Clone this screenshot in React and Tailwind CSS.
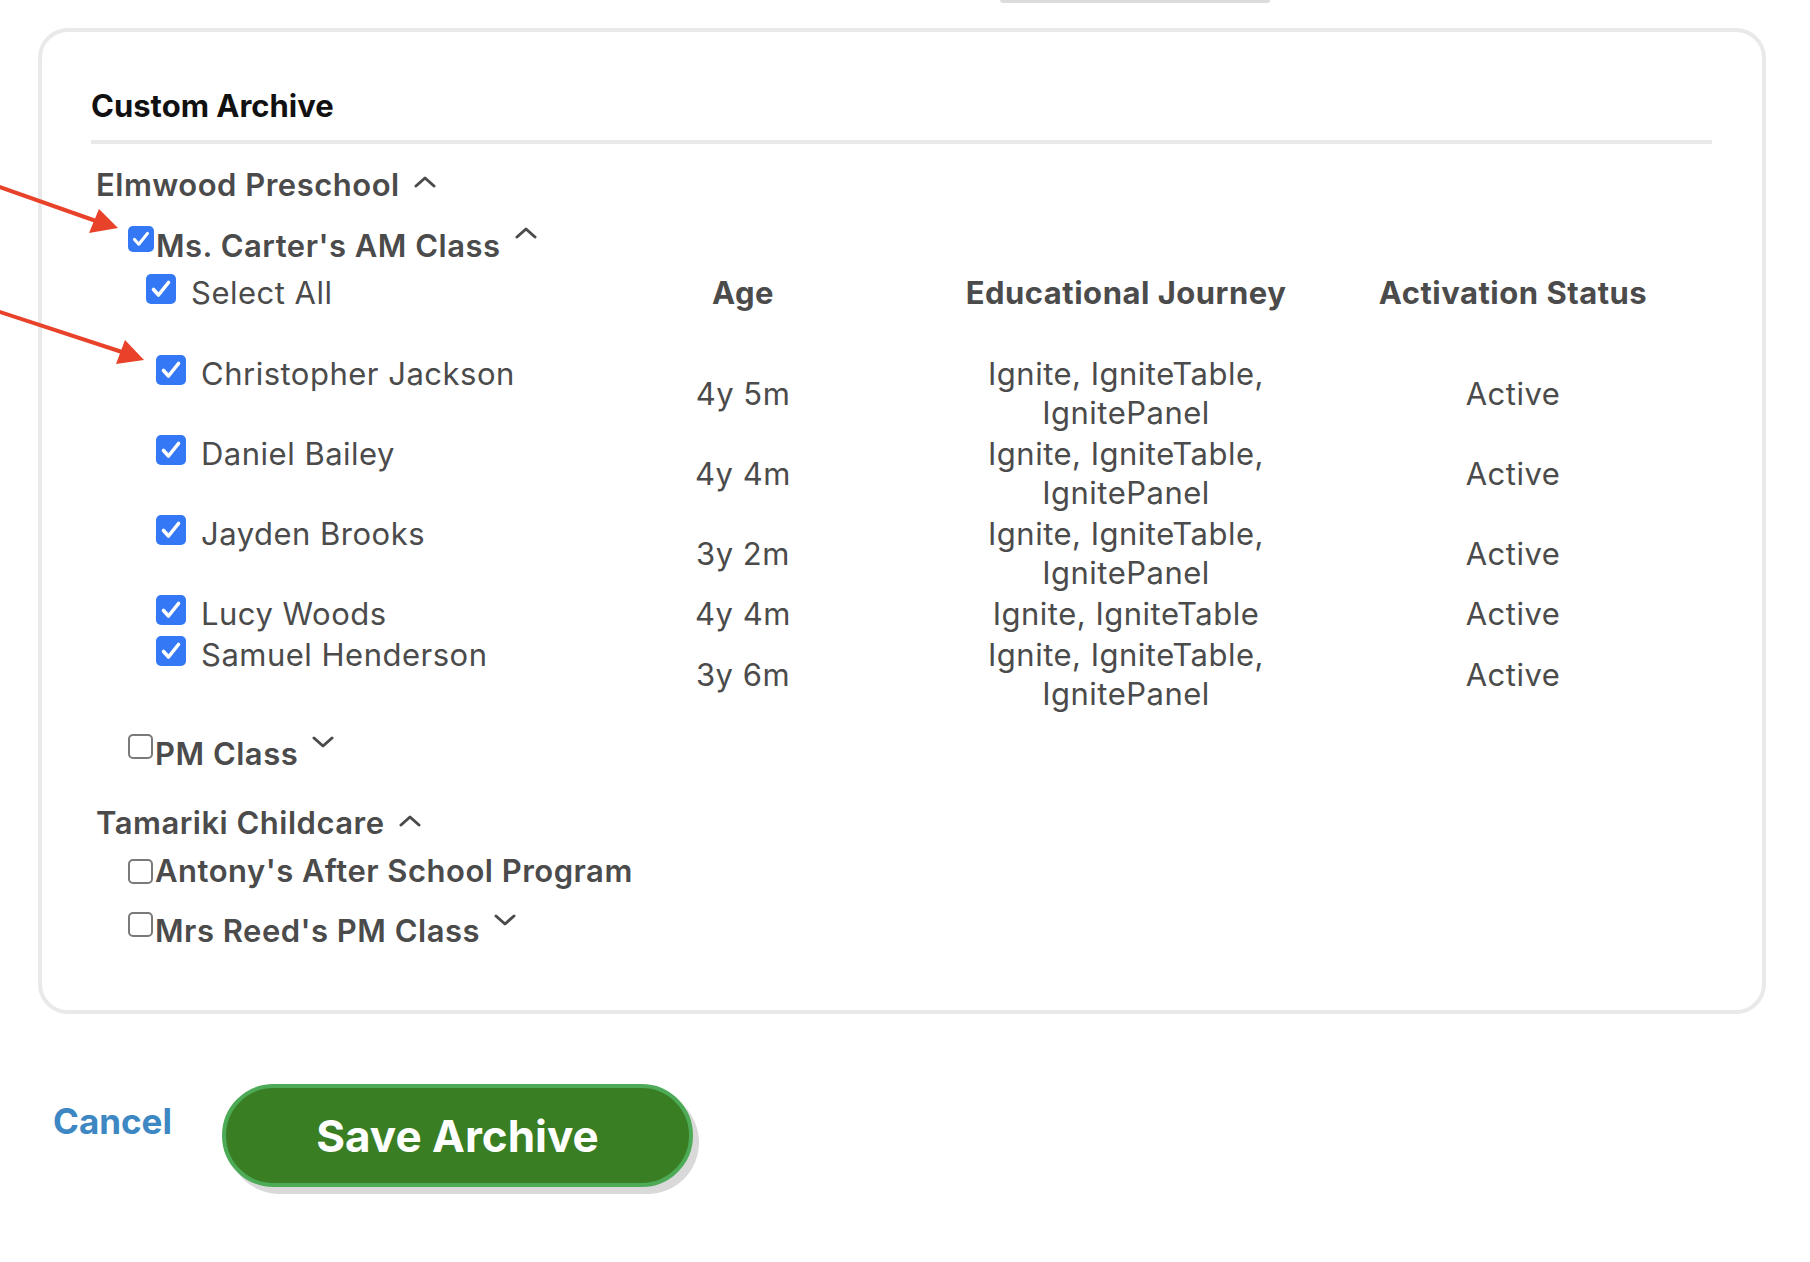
import React, { useState } from 'react';

const STUDENTS = [
  { id: 1, name: 'Christopher Jackson', age: '4y 5m', journey: 'Ignite, IgniteTable, IgnitePanel', status: 'Active' },
  { id: 2, name: 'Daniel Bailey', age: '4y 4m', journey: 'Ignite, IgniteTable, IgnitePanel', status: 'Active' },
  { id: 3, name: 'Jayden Brooks', age: '3y 2m', journey: 'Ignite, IgniteTable, IgnitePanel', status: 'Active' },
  { id: 4, name: 'Lucy Woods', age: '4y 4m', journey: 'Ignite, IgniteTable', status: 'Active' },
  { id: 5, name: 'Samuel Henderson', age: '3y 6m', journey: 'Ignite, IgniteTable, IgnitePanel', status: 'Active' },
];

function Box({ checked, big, onClick, className = '' }) {
  if (!checked) {
    return (
      <span
        onClick={onClick}
        className={`shrink-0 rounded-[5px] border-2 border-[#7a7a7a] bg-white w-[25px] h-[25px] ${className}`}
      />
    );
  }
  return (
    <span
      onClick={onClick}
      className={`shrink-0 flex items-center justify-center rounded-[5px] bg-[#3478f6] ${big ? 'w-[30px] h-[30px]' : 'w-[26px] h-[26px]'} ${className}`}
    >
      <svg viewBox="0 0 30 30" className="w-full h-full">
        <path d="M7.5 15.5 L12.5 21 L22.5 8.5" fill="none" stroke="#fff" strokeWidth="3.6" strokeLinecap="round" strokeLinejoin="round" />
      </svg>
    </span>
  );
}

function Chevron({ up, className = '' }) {
  return (
    <svg width="22" height="12" viewBox="0 0 22 12" className={`shrink-0 ${className}`}>
      <polyline
        points={up ? '2,10 11,2 20,10' : '2,2 11,10 20,2'}
        fill="none"
        stroke="#4b4b4b"
        strokeWidth="3"
        strokeLinecap="round"
        strokeLinejoin="round"
      />
    </svg>
  );
}

export default function App() {
  const [checked, setChecked] = useState(() => Object.fromEntries(STUDENTS.map(s => [s.id, true])));
  const allChecked = STUDENTS.every(s => checked[s.id]);

  const toggle = (id) => setChecked(c => ({ ...c, [id]: !c[id] }));
  const toggleAll = () => setChecked(Object.fromEntries(STUDENTS.map(s => [s.id, !allChecked])));

  return (
    <div className="relative min-h-[1262px] bg-white font-[Inter,sans-serif] text-[31px] tracking-[0.5px] text-[#4b4b4b]">
      {/* bottom edge of the control above, cut off */}
      <div className="ml-[1000px] h-[3px] w-[270px] rounded-b-full bg-[#dcdcdc]" />

      <div className="ml-[38px] mt-[25px] w-[1728px] rounded-[30px] border-4 border-[#e9e9e9] pl-[49px] pr-[50px] pt-[54px] pb-[60px]">
        <h2 className="font-bold leading-[39px] tracking-normal text-[#111]">Custom Archive</h2>
        <div className="mt-[15px] h-[4px] bg-[#e9e9e9]" />

        {/* Elmwood Preschool */}
        <button className="ml-[5px] mt-[21px] flex items-center gap-[14px] font-semibold leading-[39px]">
          Elmwood Preschool
          <Chevron up className="mb-[5px]" />
        </button>

        <div className="ml-[37px] mt-[22px] flex items-start">
          <Box checked={allChecked} onClick={toggleAll} />
          <span className="ml-[2px] font-semibold leading-[39px]">Ms. Carter's AM Class</span>
          <Chevron up className="ml-[14px] mt-[1px]" />
        </div>

        {/* student table */}
        <div className="ml-[55px] mt-[8px]">
          <div className="flex items-start leading-[39px]">
            <div className="flex w-[497px] items-start gap-[15px]">
              <Box checked={allChecked} big onClick={toggleAll} className="mt-[1px]" />
              <span>Select All</span>
            </div>
            <div className="w-[200px] text-center font-bold whitespace-nowrap">Age</div>
            <div className="ml-[113px] w-[340px] text-center font-bold whitespace-nowrap">Educational Journey</div>
            <div className="ml-[47px] w-[340px] text-center font-bold whitespace-nowrap">Activation Status</div>
          </div>

          <div className="mt-[42px] flex flex-col gap-[2px] leading-[39px]">
            {STUDENTS.map(s => (
              <div key={s.id} className="flex items-center">
                <div className="flex w-[497px] items-start gap-[15px] self-start pl-[10px]">
                  <Box checked={checked[s.id]} big onClick={() => toggle(s.id)} className="mt-[1px]" />
                  <span>{s.name}</span>
                </div>
                <div className="w-[200px] text-center">{s.age}</div>
                <div className="ml-[113px] w-[340px] text-center">{s.journey}</div>
                <div className="ml-[47px] w-[340px] text-center">{s.status}</div>
              </div>
            ))}
          </div>
        </div>

        <div className="ml-[37px] mt-[21px] flex items-start">
          <Box checked={false} />
          <span className="ml-[2px] font-semibold leading-[39px]">PM Class</span>
          <Chevron className="ml-[14px] mt-[2px]" />
        </div>

        {/* Tamariki Childcare */}
        <button className="ml-[5px] mt-[30px] flex items-center gap-[14px] font-semibold leading-[39px]">
          Tamariki Childcare
          <Chevron up className="mb-[3px]" />
        </button>

        <div className="ml-[37px] mt-[9px] flex items-start">
          <Box checked={false} className="mt-[8px]" />
          <span className="ml-[2px] font-semibold leading-[39px]">Antony's After School Program</span>
        </div>

        <div className="ml-[37px] mt-[21px] flex items-start">
          <Box checked={false} className="mt-[1px]" />
          <span className="ml-[2px] font-semibold leading-[39px]">Mrs Reed's PM Class</span>
          <Chevron className="ml-[14px] mt-[3px]" />
        </div>
      </div>

      {/* actions */}
      <div className="ml-[53px] mt-[70px] flex items-start tracking-normal">
        <button className="mt-[16px] w-[169px] text-left text-[35px] font-bold leading-[42px] text-[#3d87c3]">Cancel</button>
        <button className="h-[103px] w-[471px] rounded-full border-4 border-[#4daa57] bg-[#3a7e24] text-[44px] font-bold text-white shadow-[6px_7px_0_#d9d9d9]">
          Save Archive
        </button>
      </div>

      {/* annotation arrows */}
      <svg className="pointer-events-none absolute left-0 top-0" width="200" height="400">
        <line x1="-10" y1="183.5" x2="96" y2="221" stroke="#e8432a" strokeWidth="4" />
        <polygon points="89,233 99,209 118,228" fill="#e8432a" />
        <line x1="-10" y1="308.7" x2="122" y2="352" stroke="#e8432a" strokeWidth="4" />
        <polygon points="116,364 125,340 144,360" fill="#e8432a" />
      </svg>
    </div>
  );
}
